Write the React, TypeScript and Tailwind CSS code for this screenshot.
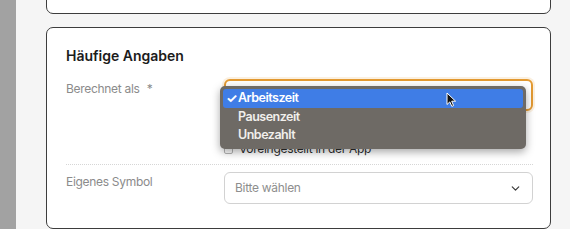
import { ChevronDown } from 'lucide-react';

const menuItems = ['Arbeitszeit', 'Pausenzeit', 'Unbezahlt'];

function Cursor() {
  return (
    <svg className="absolute left-[226px] top-[6px]" width="12" height="16" viewBox="0 0 12 16">
      <path
        d="M1 1 L1 12.5 L3.8 9.9 L5.8 14.4 L7.6 13.6 L5.7 9.2 L9.6 9.2 Z"
        fill="#111"
        stroke="#fff"
        strokeWidth="1"
        strokeLinejoin="round"
      />
    </svg>
  );
}

function DropdownMenu() {
  return (
    <div className="absolute left-[-6px] top-[5px] z-10 w-[306px] rounded-[5px] bg-[#6e6a65] px-[3px] pt-[3px] pb-[5px] shadow-[0_3px_8px_rgba(0,0,0,0.35)]">
      {menuItems.map((item, i) => (
        <div
          key={item}
          className={
            i === 0
              ? 'relative flex h-[19px] items-center rounded-[3px] bg-[#3f7de6] pl-[15px] text-[12.5px] font-semibold tracking-[-0.5px] text-white'
              : 'flex h-[18px] items-center pl-[15px] text-[12.5px] font-semibold tracking-[-0.5px] text-[#f1efec]'
          }
        >
          {i === 0 && <span className="absolute left-[3px] text-[13px] font-bold">✓</span>}
          {item}
        </div>
      ))}
      <Cursor />
    </div>
  );
}

export default function App() {
  return (
    <div
      className="flex h-[229px] w-[570px] overflow-hidden bg-[#f5f5f5]"
      style={{ fontFamily: 'Inter, "Noto Sans", sans-serif' }}
    >
      <div className="w-[16px] shrink-0 bg-[#a2a2a2]" />
      <div className="flex flex-1 flex-col gap-[13px] pl-[30px] pr-[19px]">
        <div className="-mt-[20px] h-[34px] shrink-0 rounded-b-[7px] border-[1.5px] border-[#3d3d3d] bg-white" />

        <div className="h-[202px] shrink-0 rounded-[7px] border-[1.5px] border-[#3d3d3d] bg-white pt-[18px] pl-[19px] pr-[17px]">
          <h2 className="text-[14px] leading-[20px] font-semibold text-[#1c1c1c]">Häufige Angaben</h2>

          <div className="mt-[13px] grid grid-cols-[158px_1fr]">
            <div className="pt-[1px] text-[12px] leading-[18px] tracking-[-0.3px] text-[#8b8b8b]">
              Berechnet als <span className="ml-[4px]">*</span>
            </div>
            <div>
              <div className="relative h-[32px] rounded-[6px] border-[2px] border-[#e39a32] bg-white shadow-[0_0_0_2px_rgba(227,154,50,0.15)]">
                <DropdownMenu />
              </div>
              <label className="mt-[29px] flex h-[18px] items-center gap-[6px] text-[12px] tracking-[-0.3px] text-[#2e2e2e]">
                <span className="h-[9px] w-[9px] rounded-[2px] border border-[#b5b5b5] bg-white" />
                Voreingestellt in der App
              </label>
            </div>
          </div>

          <div className="mt-[6px] border-t border-dotted border-[#d6d6d6]" />

          <div className="mt-[7px] grid grid-cols-[158px_1fr]">
            <div className="pt-[1px] text-[12px] leading-[18px] tracking-[-0.3px] text-[#8b8b8b]">Eigenes Symbol</div>
            <div className="flex h-[32px] items-center justify-between rounded-[6px] border border-[#d2d2d2] bg-white pl-[10px] pr-[10px]">
              <span className="text-[12px] tracking-[-0.3px] text-[#8e8e8e]">Bitte wählen</span>
              <ChevronDown size={13} strokeWidth={2.2} className="text-[#3a3a3a]" />
            </div>
          </div>
        </div>
      </div>
    </div>
  );
}
